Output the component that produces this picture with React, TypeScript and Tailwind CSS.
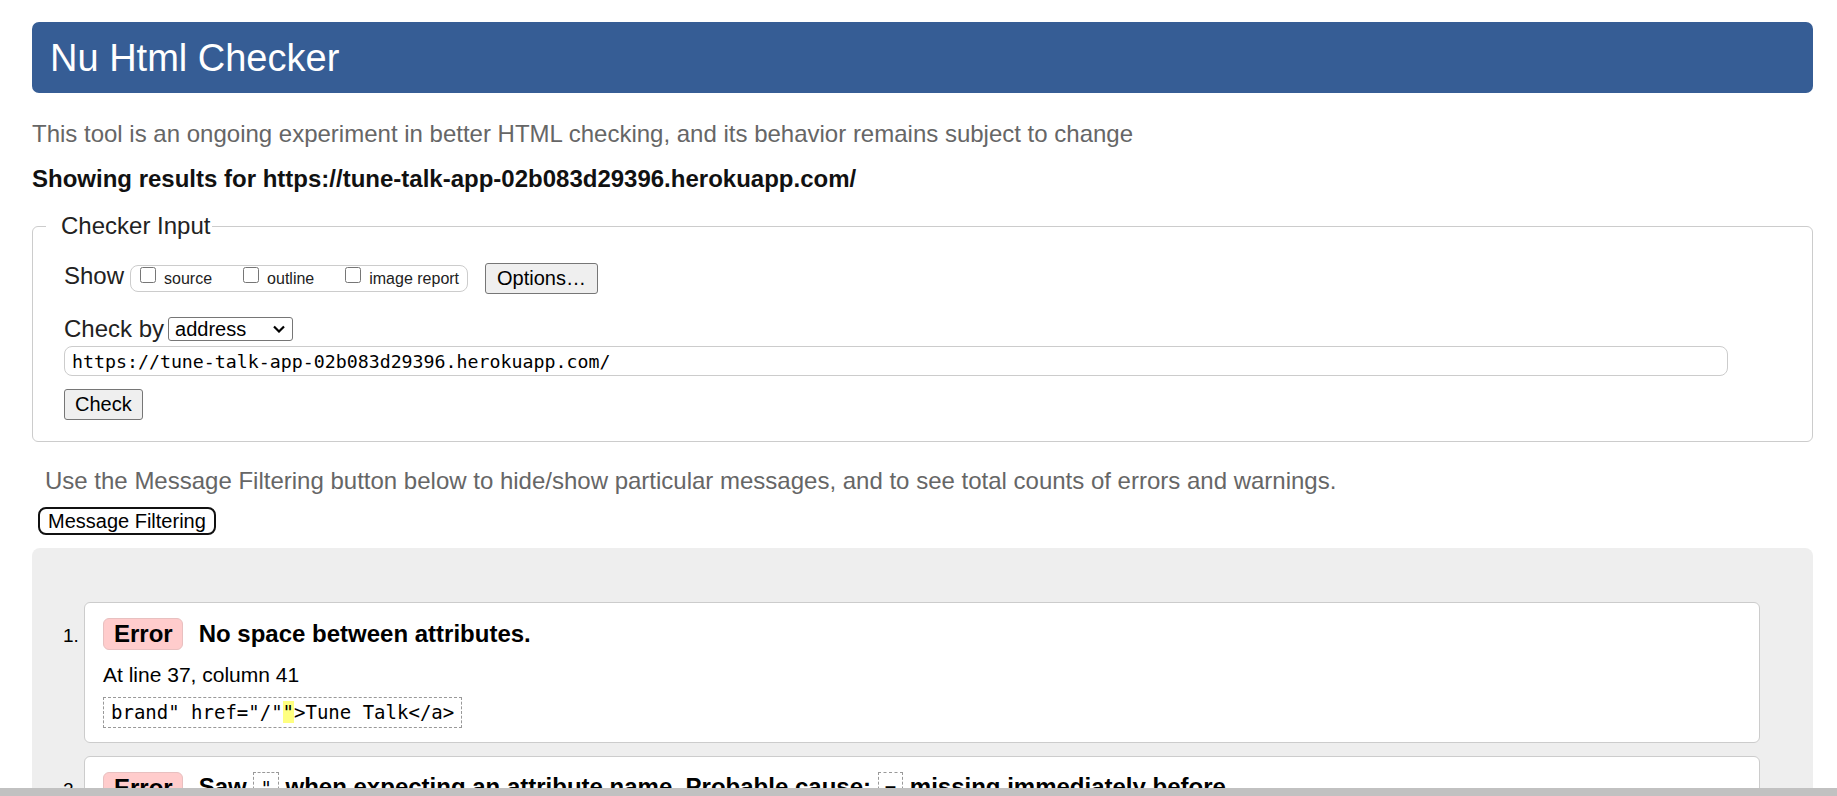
export default function App() {
  const mono = "font-['DejaVu_Sans_Mono',monospace]";
  return (
    <div className="h-[796px] w-full flex flex-col overflow-hidden bg-white font-['Liberation_Sans',Arial,sans-serif] text-[#222]">
      <div className="flex-1 min-h-0 overflow-hidden pl-[32px] pr-[24px] pt-[22px]">
        <h1 className="h-[71px] flex items-center rounded-[7px] bg-[#365d95] pl-[18px] text-[38px] leading-none text-white">
          Nu Html Checker
        </h1>
        <p className="mt-[27px] text-[24px] leading-[28px] text-[#666]">
          This tool is an ongoing experiment in better HTML checking, and its behavior remains subject to change
        </p>
        <p className="mt-[17px] text-[24px] leading-[28px] font-bold text-[#111]">
          Showing results for https://tune-talk-app-02b083d29396.herokuapp.com/
        </p>
        <fieldset className="mt-[18px] rounded-[6px] border border-[#ccc]">
          <legend className="ml-[13px] pl-[15px] pr-[2px] text-[24px] leading-[30px] text-[#222]">Checker Input</legend>
          <div className="pl-[31px] pt-[22px] pb-[21px]">
            <div className="flex items-center h-[31px]">
              <span className="text-[24px] leading-[28px] mb-[5px]">Show</span>
              <div className="ml-[6px] h-[27px] flex items-center gap-[31px] rounded-[8px] border border-[#ccc] pl-[9px] pr-[8px]">
                {["source", "outline", "image report"].map((l) => (
                  <label key={l} className="flex items-center gap-[8px]">
                    <input type="checkbox" className="m-0 w-[16px] h-[16px] mb-[7px]" />
                    <span className="text-[16px] leading-[18px]">{l}</span>
                  </label>
                ))}
              </div>
              <button className="ml-[17px] h-[31px] rounded-[3px] border border-[#767676] bg-[#efefef] px-[11px] text-[20px] leading-[29px] text-black">
                Options…
              </button>
            </div>
            <div className="mt-[23px] flex items-center h-[24px]">
              <span className="text-[24px] leading-[28px]">Check by</span>
              <div className="ml-[4px] h-[24px] w-[125px] flex items-center justify-between rounded-[3px] border border-[#767676] pl-[6px] pr-[7px] text-[20px] leading-[22px] text-black">
                <span>address</span>
                <svg width="12" height="8" viewBox="0 0 12 8" className="mb-[1px]">
                  <polyline points="1,1.5 6,6.5 11,1.5" fill="none" stroke="#000" strokeWidth="2.2" />
                </svg>
              </div>
            </div>
            <input
              readOnly
              defaultValue="https://tune-talk-app-02b083d29396.herokuapp.com/"
              className={`mt-[5px] block h-[30px] w-[1664px] rounded-[8px] border border-[#ccc] pl-[7px] text-[18.25px] text-black outline-none ${mono}`}
            />
            <button className="mt-[13px] block h-[31px] rounded-[3px] border border-[#767676] bg-[#efefef] px-[10px] text-[20px] leading-[29px] text-black">
              Check
            </button>
          </div>
        </fieldset>
        <p className="mt-[25px] pl-[13px] text-[24px] leading-[28px] text-[#666]">
          Use the Message Filtering button below to hide/show particular messages, and to see total counts of errors and warnings.
        </p>
        <button className="mt-[12px] ml-[6px] block h-[28px] rounded-[8px] border-2 border-[#111] px-[8px] text-[20px] leading-[24px] text-black">
          Message Filtering
        </button>
        <div className="mt-[13px] rounded-t-[8px] bg-[#eee] pt-[54px] pl-[31px] pr-[53px] pb-[40px]">
          <ol className="flex flex-col gap-[13px]">
            <li className="flex items-baseline">
              <span className="w-[21px] shrink-0 text-[19px] text-black">1.</span>
              <div className="flex-1 rounded-[6px] border border-[#ccc] bg-white pt-[15px] pl-[18px] pr-4 pb-[14px] text-black">
                <div className="flex items-center gap-[16px]">
                  <span className="h-[32px] rounded-[6px] border border-[#e8c0c0] bg-[#ffcccc] pl-[10px] pr-[9px] text-[24px] leading-[30px] font-bold">
                    Error
                  </span>
                  <span className="text-[24px] leading-[30px] font-bold">No space between attributes.</span>
                </div>
                <p className="mt-[13px] text-[21px] leading-[24px]">At line 37, column 41</p>
                <div className={`mt-[10px] w-fit border border-dashed border-[#999] px-[7px] text-[19px] leading-[29px] whitespace-pre ${mono}`}>
                  {'brand" href="/"'}
                  <span className="bg-[#ffff80]">{'"'}</span>
                  {">Tune Talk</a>"}
                </div>
              </div>
            </li>
            <li className="flex items-baseline">
              <span className="w-[21px] shrink-0 text-[19px] text-black">2.</span>
              <div className="flex-1 rounded-[6px] border border-[#ccc] bg-white pt-[15px] pl-[18px] pr-4 pb-[14px] text-black">
                <div className="flex items-center gap-[16px]">
                  <span className="h-[32px] rounded-[6px] border border-[#e8c0c0] bg-[#ffcccc] pl-[10px] pr-[9px] text-[24px] leading-[30px] font-bold">
                    Error
                  </span>
                  <span className="text-[24px] leading-[30px] font-bold">
                    Saw{" "}
                    <span className={`inline-block border border-dashed border-[#999] px-[6px] text-[19px] leading-[30px] font-normal ${mono}`}>"</span>{" "}
                    when expecting an attribute name. Probable cause:{" "}
                    <span className={`inline-block border border-dashed border-[#999] px-[6px] text-[19px] leading-[30px] font-normal ${mono}`}>=</span>{" "}
                    missing immediately before.
                  </span>
                </div>
                <p className="mt-[13px] text-[21px] leading-[24px]">At line 37, column 41</p>
              </div>
            </li>
          </ol>
        </div>
      </div>
      <div className="h-[8px] shrink-0 bg-[#c1c1c1]" />
    </div>
  );
}
